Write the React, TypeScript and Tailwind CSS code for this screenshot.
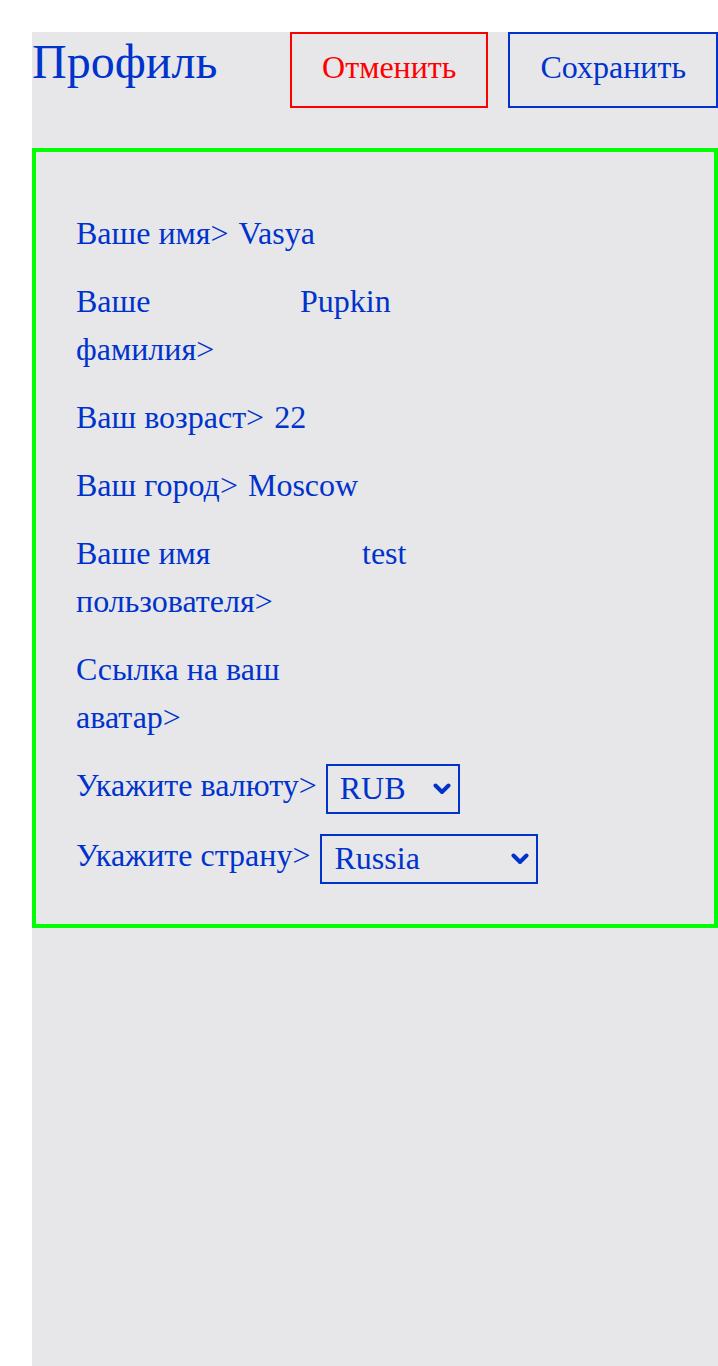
const rows = [
  { label: "Ваше имя>", value: "Vasya", width: "" },
  { label: "Ваше фамилия>", value: "Pupkin", width: "w-[214px]" },
  { label: "Ваш возраст>", value: "22", width: "" },
  { label: "Ваш город>", value: "Moscow", width: "" },
  { label: "Ваше имя пользователя>", value: "test", width: "w-[276px]" },
  { label: "Ссылка на ваш аватар>", value: "", width: "w-[276px]" },
];

function Chevron() {
  return (
    <svg width="18" height="12" viewBox="0 0 18 12" fill="none">
      <path d="M2.5 2.5 L9 9 L15.5 2.5" stroke="#0033cc" strokeWidth="4" strokeLinecap="round" strokeLinejoin="round" />
    </svg>
  );
}

function FakeSelect({ value, width }: { value: string; width: string }) {
  return (
    <div className={`mt-[3px] flex h-[50px] shrink-0 items-center justify-between border-2 border-[#0033cc] pl-3 pr-[7px] ${width}`}>
      <span className="-mt-[3px]">{value}</span>
      <Chevron />
    </div>
  );
}

export default function App() {
  return (
    <div className="min-h-screen bg-white pl-8 pt-8 font-['Liberation_Serif',serif] text-[#0033cc]">
      <div className="min-h-[1334px] bg-[#e7e7ea]">
        <div className="flex items-start justify-between">
          <h1 className="mt-[2px] text-[48px] leading-[normal]">Профиль</h1>
          <div className="flex gap-5">
            <button className="flex h-[76px] items-center border-2 border-[#ff0000] px-[30px] pb-[6px] text-[32px] text-[#ff0000]">
              Отменить
            </button>
            <button className="flex h-[76px] items-center border-2 border-[#0033cc] px-[30px] pb-[6px] text-[32px]">
              Сохранить
            </button>
          </div>
        </div>

        <div className="mt-10 border-4 border-[#00ff00] px-10 pb-10 pt-[57px] text-[32px] leading-[48px]">
          <div className="flex flex-col gap-5">
            {rows.map((r) => (
              <div key={r.label} className="flex items-start gap-[10px]">
                <span className={`shrink-0 ${r.width}`}>{r.label}</span>
                <span>{r.value}</span>
              </div>
            ))}
            <div className="flex h-[50px] items-start gap-[9px]">
              <span>Укажите валюту&gt;</span>
              <FakeSelect value="RUB" width="w-[134px]" />
            </div>
            <div className="flex h-[53px] items-start gap-[10px]">
              <span>Укажите страну&gt;</span>
              <FakeSelect value="Russia" width="w-[218px]" />
            </div>
          </div>
        </div>
      </div>
    </div>
  );
}
